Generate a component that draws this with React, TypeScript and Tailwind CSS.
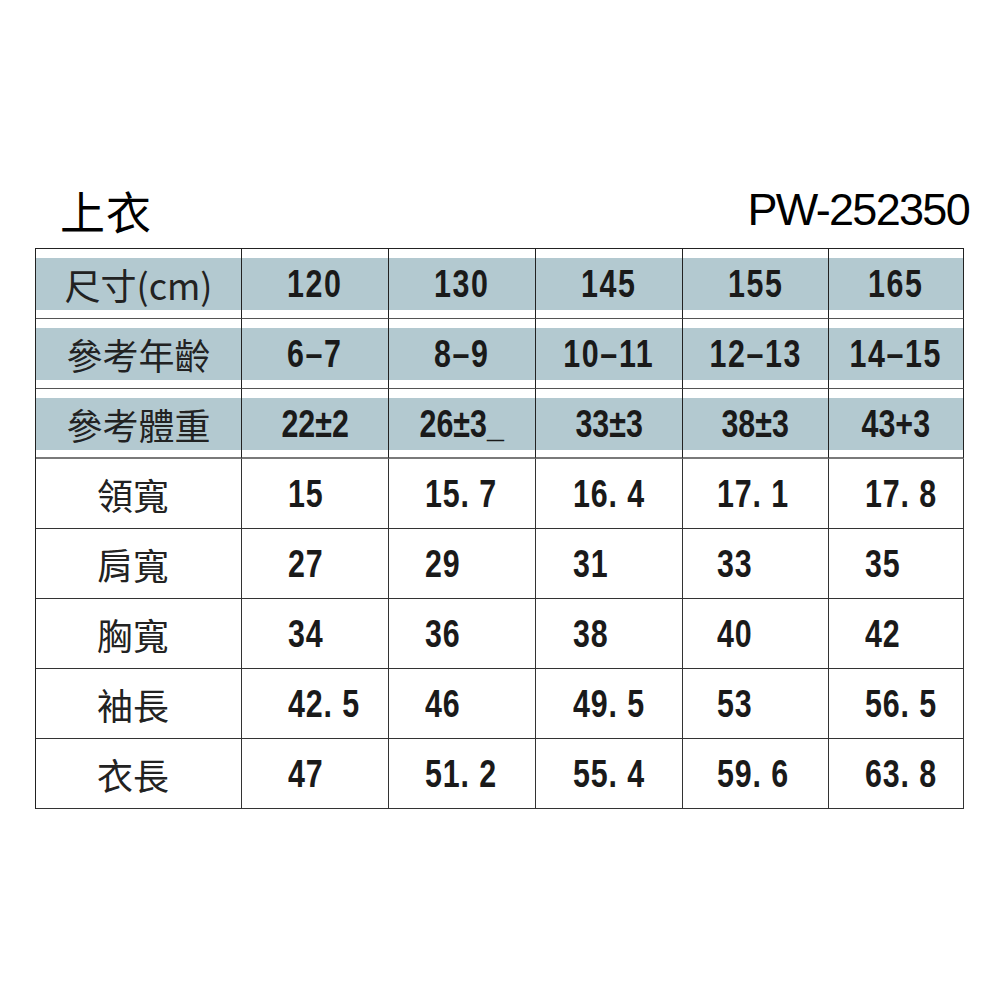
const cjk = "font-['Noto_Sans_CJK_TC','Noto_Sans_CJK_SC',sans-serif]";
const num = "font-['Liberation_Sans',Arial,sans-serif] font-bold";

const headRows: { label: string; values: string[] }[] = [
  { label: "尺寸(cm)", values: ["120", "130", "145", "155", "165"] },
  { label: "參考年齡", values: ["6–7", "8–9", "10–11", "12–13", "14–15"] },
  { label: "參考體重", values: ["22±2", "26±3_", "33±3", "38±3", "43+3"] },
];

const bodyRows: { label: string; values: string[] }[] = [
  { label: "領寬", values: ["15", "15.7", "16.4", "17.1", "17.8"] },
  { label: "肩寬", values: ["27", "29", "31", "33", "35"] },
  { label: "胸寬", values: ["34", "36", "38", "40", "42"] },
  { label: "袖長", values: ["42.5", "46", "49.5", "53", "56.5"] },
  { label: "衣長", values: ["47", "51.2", "55.4", "59.6", "63.8"] },
];

// left offsets of the body numbers inside each column
const bodyPad = ["pl-[46px]", "pl-[36px]", "pl-[37px]", "pl-[34px]", "pl-[36px]"];

function Num({ v }: { v: string }) {
  // the dot in the picture leaves a wide gap before the decimal
  const i = v.indexOf(".");
  if (i < 0) return <>{v}</>;
  return (
    <>
      {v.slice(0, i)}
      <span className="mr-[12px]">.</span>
      {v.slice(i + 1)}
    </>
  );
}

export default function App() {
  return (
    <div className="h-[1000px] w-[1000px] bg-white text-[#111]">
      <div className="pt-[188px]">
        {/* 標題列 */}
        <div className="flex h-[44px] items-start justify-between pl-[60px] pr-[31px]">
          <h1 className={`${cjk} text-[45px] leading-none font-normal tracking-[1px] text-black`}>上衣</h1>
          <p className="mt-[-1px] font-['Liberation_Sans',sans-serif] text-[45px] leading-none font-light tracking-[-1.7px] text-black">
            PW-252350
          </p>
        </div>

        {/* 尺寸表 */}
        <div className="ml-[35px] mt-[16px] grid w-[929px] grid-cols-[206px_147px_147px_147px_146px_135px] border-l border-t border-[#222]">
          {headRows.map((row, r) => (
            <div key={row.label} className="contents">
              <div
                className={`h-[70px] border-r border-[#222] bg-white py-[9px] ${
                  r === 2 ? "border-b-2 border-b-[#7a7a7a]" : "border-b border-b-[#555]"
                }`}
              >
                <div className={`${cjk} flex h-[52px] items-center justify-center bg-[#b3c9d0] text-[36px] leading-none text-[#222]`}>
                  {row.label}
                </div>
              </div>
              {row.values.map((v) => (
                <div
                  key={v}
                  className={`h-[70px] border-r border-[#222] bg-white py-[9px] ${
                    r === 2 ? "border-b-2 border-b-[#7a7a7a]" : "border-b border-b-[#555]"
                  }`}
                >
                  <div className={`${num} flex h-[52px] items-center justify-center bg-[#b3c9d0] text-[38px] leading-none text-[#1a1a1a]`}>
                    <span className={`inline-block scale-x-[0.8] ${r === 2 ? "tracking-[0px]" : "tracking-[2px]"}`}>{v}</span>
                  </div>
                </div>
              ))}
            </div>
          ))}

          {bodyRows.map((row) => (
            <div key={row.label} className="contents">
              <div className={`${cjk} flex h-[70px] items-center border-r border-b border-[#333] pl-[61px] text-[36px] leading-none text-[#222]`}>
                {row.label}
              </div>
              {row.values.map((v, c) => (
                <div
                  key={c}
                  className={`${num} flex h-[70px] items-center border-r border-b border-[#333] text-[38px] leading-none text-[#1a1a1a] ${bodyPad[c]}`}
                >
                  <span className="inline-block origin-left scale-x-[0.8] tracking-[1px]">
                    <Num v={v} />
                  </span>
                </div>
              ))}
            </div>
          ))}
        </div>
      </div>
    </div>
  );
}
